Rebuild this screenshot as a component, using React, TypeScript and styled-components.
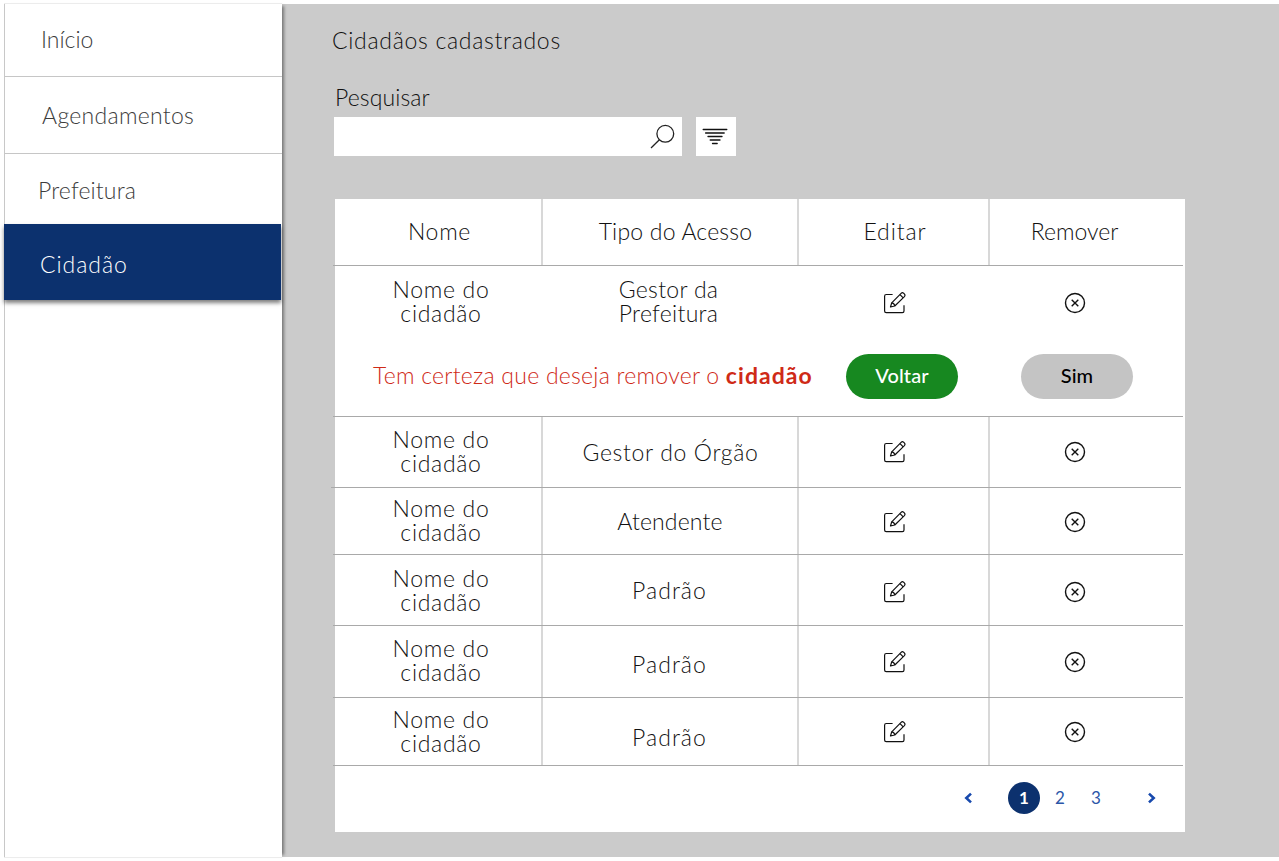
import React from "react";
import styled, { createGlobalStyle } from "styled-components";

const GlobalStyle = createGlobalStyle`
  * { box-sizing: border-box; }
  body { margin: 0; background: #fff; font-family: Lato, "Liberation Sans", sans-serif; }
`;

const Page = styled.div`
  display: flex;
  width: 1279px;
  height: 861px;
  padding: 4px 0 4px 4px;
  overflow: hidden;
  background: #fff;
`;

const Sidebar = styled.nav`
  display: flex;
  flex-direction: column;
  flex: none;
  width: 278px;
  height: 853px;
  background: #fff;
  border-left: 1px solid #c8c8c8;
  box-shadow: 0 -1px 0 #ececec, 0 1px 0 #ececec, 4px 0 3px -2px rgba(0, 0, 0, 0.42);
  z-index: 1;
`;

const NavItem = styled.a<{ $h: number; $left: number; $top: number; $ls: number; $active?: boolean; $last?: boolean }>`
  flex: none;
  height: ${(p) => p.$h}px;
  margin: ${(p) => (p.$active ? "0 1px 0 -1px" : "0")};
  padding: ${(p) => p.$top}px 0 0 ${(p) => p.$left}px;
  border-bottom: ${(p) => (p.$active || p.$last ? "none" : "1px solid #c6c6c6")};
  background: ${(p) => (p.$active ? "#0c316e" : "transparent")};
  color: ${(p) => (p.$active ? "#fff" : "#3c3c3c")};
  box-shadow: ${(p) => (p.$active ? "0 3px 4px rgba(0,0,0,0.5)" : "none")};
  font-size: 23px;
  font-weight: 300;
  line-height: 28px;
  letter-spacing: ${(p) => p.$ls}px;
  white-space: nowrap;
`;

const Main = styled.main`
  flex: 1;
  height: 853px;
  padding: 22px 0 0 50px;
  background: #cbcbcb;
`;

const Title = styled.h1`
  margin: 0;
  font-size: 23px;
  font-weight: 300;
  line-height: 28px;
  letter-spacing: 0.7px;
  color: #111;
`;

const SearchLabel = styled.label`
  display: block;
  margin: 29px 0 0 3px;
  font-size: 23px;
  font-weight: 300;
  line-height: 28px;
  letter-spacing: 0.1px;
  color: #111;
`;

const SearchRow = styled.div`
  display: flex;
  gap: 14px;
  margin: 6px 0 0 2px;
`;

const SearchBox = styled.div`
  display: flex;
  justify-content: flex-end;
  align-items: center;
  width: 348px;
  height: 39px;
  padding-right: 7px;
  background: #fff;
`;

const FilterButton = styled.button`
  display: flex;
  align-items: center;
  justify-content: center;
  width: 40px;
  height: 39px;
  padding: 0 2px 0 0;
  border: 0;
  background: #fff;
`;

const Panel = styled.section`
  width: 850px;
  height: 633px;
  margin: 43px 0 0 3px;
  background: #fff;
`;

const Row = styled.div<{ $h: number }>`
  display: grid;
  grid-template-columns: 208px 256px 191px 195px;
  height: ${(p) => p.$h}px;
`;

const Divider = styled.div<{ $shift?: number }>`
  width: 850px;
  height: 1px;
  margin-left: ${(p) => p.$shift ?? -2}px;
  background: #a9a9a9;
`;

const Cell = styled.div<{ $plain?: boolean; $pl?: number; $pr?: number; $pt?: number; $pb?: number; $ls?: number }>`
  display: flex;
  align-items: center;
  justify-content: center;
  padding: ${(p) => p.$pt ?? 0}px ${(p) => p.$pr ?? 0}px ${(p) => p.$pb ?? 3}px ${(p) => p.$pl ?? 0}px;
  border-right: 2px solid ${(p) => (p.$plain ? "transparent" : "#d8d8d8")};
  color: #111;
  font-size: 23px;
  font-weight: 300;
  line-height: 24px;
  letter-spacing: ${(p) => p.$ls ?? 0.7}px;
  text-align: center;
  white-space: pre-line;
`;

const Confirm = styled.div`
  display: flex;
  align-items: flex-start;
  height: 78px;
  padding: 16px 0 0 38px;
`;

const Question = styled.p`
  flex: none;
  width: 473px;
  margin: 7px 0 0;
  font-size: 23px;
  font-weight: 300;
  line-height: 28px;
  letter-spacing: 0.25px;
  color: #cf2a17;
  white-space: nowrap;

  strong { font-weight: 700; letter-spacing: 1.05px; }
`;

const Pill = styled.button<{ $tone: "green" | "gray" }>`
  flex: none;
  width: 112px;
  height: 45px;
  margin-right: 63px;
  padding: 0 0 3px;
  border: 0;
  border-radius: 23px;
  background: ${(p) => (p.$tone === "green" ? "#178820" : "#c4c4c4")};
  color: ${(p) => (p.$tone === "green" ? "#fff" : "#000")};
  font: 500 20px/24px Lato, "Liberation Sans", sans-serif;
  letter-spacing: 0.1px;
`;

const Pagination = styled.div`
  display: flex;
  align-items: center;
  height: 64px;
  padding-left: 628px;
`;

const PageNumber = styled.button<{ $current?: boolean }>`
  width: 32px;
  height: 32px;
  margin-right: 4px;
  padding: 0;
  border: 0;
  border-radius: 50%;
  background: ${(p) => (p.$current ? "#0c316e" : "transparent")};
  color: ${(p) => (p.$current ? "#fff" : "#2b56a8")};
  font: ${(p) => (p.$current ? 700 : 400)} 17px/32px Lato, "Liberation Sans", sans-serif;
`;

const Arrow = styled.svg<{ $before?: number; $after?: number }>`
  margin: 0 ${(p) => p.$after ?? 0}px 0 ${(p) => p.$before ?? 0}px;
`;

const SearchIcon = () => (
  <svg width="25" height="25" viewBox="0 0 25 25" fill="none" stroke="#222" strokeWidth="1.3">
    <circle cx="15.3" cy="9.8" r="8.4" />
    <path d="M9.4 15.8 1 24" />
  </svg>
);

const FilterIcon = () => (
  <svg width="26" height="18" viewBox="0 0 26 18" fill="none" stroke="#111" strokeWidth="1.3" strokeLinecap="round">
    <path d="M1.2 1.5H24.8M3.6 5H22.2M6 8.5H20M8.2 12H18M10.5 15.5H15.2" />
  </svg>
);

const EditIcon = () => (
  <svg width="22" height="22" viewBox="0 0 22 22" fill="none" stroke="#111" strokeWidth="1.2" strokeLinejoin="round">
    <path d="M8.6 2.5H2.3Q.6 2.5 .6 4.2V19Q.6 20.6 2.3 20.6H18.4Q20 20.6 20 19V13.3" />
    <path d="M6.5 15 7.7 10.9 17.1 1.4Q18.3.2 19.6 1.2L20.5 2.1Q21.5 3.3 20.4 4.6L10.8 14Z" />
    <path d="m16 2.6 3.2 3.2M7.7 10.9q2.5.2 3.1 3.1" />
  </svg>
);

const RemoveIcon = () => (
  <svg width="22" height="22" viewBox="0 0 22 22" fill="none" stroke="#111" strokeWidth="1.4">
    <circle cx="11" cy="11" r="9.5" />
    <path d="m7.7 7.7 6.6 6.6m0-6.6-6.6 6.6" />
  </svg>
);

type Access = { label: string; height: number; top: number; ls: number; pl?: number; nameTop?: number; iconTop?: number; shift?: number };

const rows: Access[] = [
  { label: "Gestor do Órgão", height: 70, top: 0, ls: 0.65, pl: 2, shift: -4 },
  { label: "Atendente", height: 66, top: 0, ls: 0.15, pl: 1, iconTop: 1 },
  { label: "Padrão", height: 70, top: 0, ls: 1.05, nameTop: 2, iconTop: 3 },
  { label: "Padrão", height: 71, top: 4, ls: 1.05 },
  { label: "Padrão", height: 67, top: 10, ls: 1.05, nameTop: 2 },
];

const Actions = ({ plain, top = 0 }: { plain?: boolean; top?: number }) => (
  <>
    <Cell $plain={plain} $pl={3} $pt={top} $pb={0}><EditIcon /></Cell>
    <Cell $plain $pr={24} $pt={top} $pb={0}><RemoveIcon /></Cell>
  </>
);

export default function App() {
  return (
    <>
      <GlobalStyle />
      <Page>
        <Sidebar>
          <NavItem $h={73} $left={36} $top={21} $ls={0}>Início</NavItem>
          <NavItem $h={77} $left={37} $top={24} $ls={0.3}>Agendamentos</NavItem>
          <NavItem $h={70} $left={33} $top={22} $ls={0.15} $last>Prefeitura</NavItem>
          <NavItem $h={76} $left={36} $top={26} $ls={0.95} $active>Cidadão</NavItem>
        </Sidebar>
        <Main>
          <Title>Cidadãos cadastrados</Title>
          <SearchLabel>Pesquisar</SearchLabel>
          <SearchRow>
            <SearchBox><SearchIcon /></SearchBox>
            <FilterButton aria-label="Filtrar"><FilterIcon /></FilterButton>
          </SearchRow>
          <Panel>
            <Row $h={66}>
              <Cell $pl={3}>Nome</Cell>
              <Cell $pl={11} $ls={0.2}>Tipo do Acesso</Cell>
              <Cell $pl={3} $ls={0.9}>Editar</Cell>
              <Cell $plain $pr={24} $ls={0}>Remover</Cell>
            </Row>
            <Divider />
            <Row $h={72}>
              <Cell $plain $pl={6}>{"Nome do\ncidadão"}</Cell>
              <Cell $plain $pr={3} $ls={0.3}>{"Gestor da\nPrefeitura"}</Cell>
              <Actions plain top={2} />
            </Row>
            <Confirm>
              <Question>Tem certeza que deseja remover o <strong>cidadão</strong></Question>
              <Pill $tone="green">Voltar</Pill>
              <Pill $tone="gray">Sim</Pill>
            </Confirm>
            <Divider />
            {rows.map((r, i) => (
              <React.Fragment key={i}>
                <Row $h={r.height}>
                  <Cell $pl={6} $pt={r.nameTop}>{"Nome do\ncidadão"}</Cell>
                  <Cell $pt={r.top} $pb={0} $pr={1} $pl={r.pl} $ls={r.ls}>{r.label}</Cell>
                  <Actions top={r.iconTop} />
                </Row>
                <Divider $shift={r.shift} />
              </React.Fragment>
            ))}
            <Pagination>
              <Arrow $after={35} width="10" height="12" viewBox="0 0 10 12" fill="none" stroke="#1749ad" strokeWidth="2.6">
                <path d="M8 1.6 3.3 6 8 10.4" />
              </Arrow>
              <PageNumber $current>1</PageNumber>
              <PageNumber>2</PageNumber>
              <PageNumber>3</PageNumber>
              <Arrow $before={31} width="10" height="12" viewBox="0 0 10 12" fill="none" stroke="#1749ad" strokeWidth="2.6">
                <path d="M2 1.6 6.7 6 2 10.4" />
              </Arrow>
            </Pagination>
          </Panel>
        </Main>
      </Page>
    </>
  );
}
